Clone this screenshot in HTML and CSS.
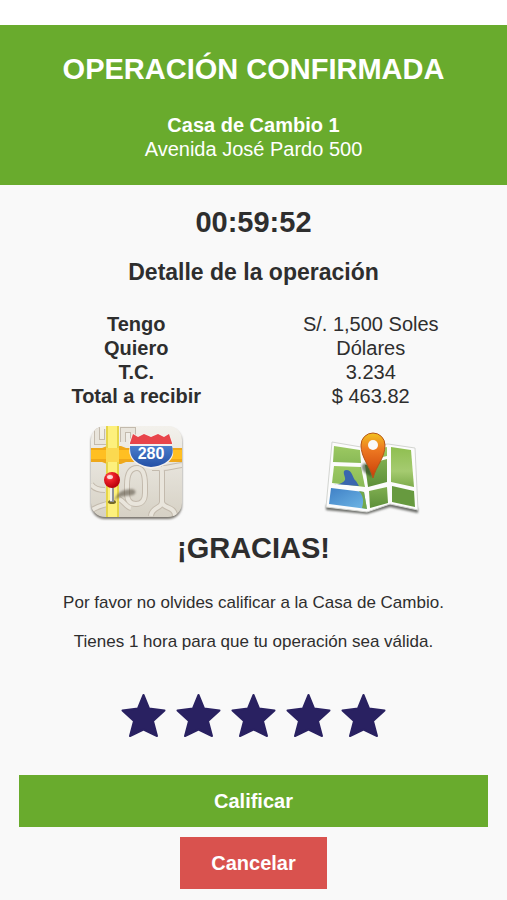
FILE: index.html
```html
<!DOCTYPE html>
<html lang="es">
<head>
<meta charset="utf-8">
<meta name="viewport" content="width=device-width, initial-scale=1">
<title>Operación confirmada</title>
<link rel="stylesheet" href="styles.css">
</head>
<body>
<header class="banner">
  <h1 class="heading">OPERACIÓN CONFIRMADA</h1>
  <p class="place"><strong>Casa de Cambio 1</strong><br>Avenida José Pardo 500</p>
</header>
<main class="content">
  <p class="heading timer">00:59:52</p>
  <h2 class="subheading">Detalle de la operación</h2>
  <table class="details">
    <tbody>
      <tr><th scope="row">Tengo</th><td>S/. 1,500 Soles</td></tr>
      <tr><th scope="row">Quiero</th><td>Dólares</td></tr>
      <tr><th scope="row">T.C.</th><td>3.234</td></tr>
      <tr><th scope="row">Total a recibir</th><td>$ 463.82</td></tr>
    </tbody>
  </table>
  <nav class="maps">
    <a href="#mapa" aria-label="Mapa">
      <svg class="map" viewBox="0 0 98 98" aria-hidden="true">
        <defs>
          <clipPath id="tile"><rect x="4" y="2" width="91" height="91" rx="14"/></clipPath>
          <linearGradient id="land" x2="0" y2="1"><stop stop-color="#f3f1ec"/><stop offset="1" stop-color="#d6d1c5"/></linearGradient>
          <linearGradient id="shield" x2="0" y2="1"><stop stop-color="#4a7dcb"/><stop offset="1" stop-color="#2450a6"/></linearGradient>
          <radialGradient id="ball" cx=".35" cy=".3" r=".7"><stop stop-color="#ff8a84"/><stop offset=".35" stop-color="#ee2029"/><stop offset="1" stop-color="#b8000d"/></radialGradient>
          <filter id="soft" x="-20%" y="-20%" width="140%" height="140%"><feGaussianBlur stdDeviation="1"/></filter>
          <path id="roads" d="M10 0v18h10V5M36 18V6h10v16M50 44c-7 0-10 6-10 17v8c0 8 4 11 9 11s9-3 9-11v-8c0-11-2-17-8-17zM65 44h7c3 0 3 2 3 5v29c0 7-10 4-11 14M75 78c1 7 13 4 13 14M75 44c8 0 10-2 20-3M4 60c3 5 8 6 14 6M0 90c8-8 14-8 20-10M32 75c5 2 7 8 12 9"/>
        </defs>
        <rect x="4" y="4" width="91" height="91" rx="14" fill="#77736c" filter="url(#soft)"/>
        <rect x="4" y="2" width="91" height="91" rx="14" fill="url(#land)"/>
        <g clip-path="url(#tile)">
          <use href="#roads" class="road-edge"/>
          <use href="#roads" class="road"/>
          <path d="M3 24h12l5-2h14l5 2h56v14H39l-5 2H20l-5-2H3z" fill="#efa81a"/>
          <path d="M3 26h92v9H3z" fill="#ffbf22"/>
          <path d="M19 0h13v98H19z" fill="#e6d548"/>
          <path d="M21 0h9v98h-9z" fill="#fdf07c"/>
          <path d="M19 24h13v14H19z" fill="#fbd950"/>
        </g>
        <path d="M42 18l4-9 5 3 6-3 7 3 7-3 6 3 5-3 4 9c-2 4 1 8 0 13-2 7-9 12-22 14-12-2-19-7-21-14-2-5 1-9-1-13z" fill="#f4f1ee"/>
        <path d="M43 19l3-9 5 3 6-3 7 3 7-3 6 3 5-3 3 9v1H43z" fill="#e8444a"/>
        <path d="M43 22h42c1 3 1 6 0 9-3 7-10 11-21 12-10-1-17-5-20-12-1-3-1-6-1-9z" fill="url(#shield)"/>
        <text class="route" x="64" y="35" text-anchor="middle">280</text>
        <path d="M26 78c4-6 4-12 19-13 4 1 5 4 1 6-7 2-13-1-20 7z" fill="#5d5547" opacity=".6" filter="url(#soft)"/>
        <ellipse cx="25" cy="78" rx="4" ry="2" fill="#756928"/>
        <path d="M25 60v18" stroke="#8f9298" stroke-width="4"/>
        <path d="M24 60v17" stroke="#f0f0f0" stroke-width="2"/>
        <circle cx="25" cy="56" r="8" fill="url(#ball)"/>
        <ellipse cx="23" cy="53" rx="3" ry="2" fill="#fff" opacity=".75"/>
      </svg>
    </a>
    <a href="#ruta" aria-label="Cómo llegar">
      <svg class="map" viewBox="0 0 98 98" aria-hidden="true">
        <defs>
          <linearGradient id="field" x2="0" y2="1"><stop stop-color="#9cc962"/><stop offset="1" stop-color="#8aba57"/></linearGradient>
          <linearGradient id="east" x2="0" y2="1"><stop stop-color="#8fbf50"/><stop offset=".6" stop-color="#a5cb70"/><stop offset="1" stop-color="#7dac4b"/></linearGradient>
          <linearGradient id="fold" x2="0" y2="1"><stop stop-color="#7fae50"/><stop offset="1" stop-color="#5d8f39"/></linearGradient>
          <linearGradient id="lake" x2="1" y2="1"><stop stop-color="#3f80c6"/><stop offset="1" stop-color="#70b8e6"/></linearGradient>
          <linearGradient id="marker" x2="0" y2="1"><stop stop-color="#f2c21f"/><stop offset=".35" stop-color="#ee7a22"/><stop offset="1" stop-color="#ca3e08"/></linearGradient>
        </defs>
        <path d="M4 86l41 4 23-7 28 6v-5l-28-5-23 5-41-3z" fill="#6a6c68" filter="url(#soft)"/>
        <path d="M10 18l29 5 27-3 27 4 3 62-28-6-23 8-41-5z" fill="#fcfcfc" stroke="#d3d5d1"/>
        <path d="M12 22l26 4 1 13-28-1z" fill="url(#field)"/>
        <path d="M12 42l27 1 4 20-33-4z" fill="url(#field)"/>
        <path d="M9 64l33 4 3 17-38-5z" fill="url(#lake)"/>
        <path d="M12 60c5 1 9-1 11-4 1-3-4-9 1-10 7 0 6 8 10 11l3 5z" fill="#3a66ae"/>
        <path d="M37 67l5 1 3 17-5-1c1-4 3-10-3-17z" fill="#72a84a"/>
        <path d="M42 27l23-4v9l-22 5z" fill="url(#field)"/>
        <path d="M43 41l22-6v23l-19 5z" fill="url(#fold)"/>
        <path d="M47 67l18-4 1 16-18 5z" fill="url(#fold)"/>
        <path d="M69 23l20 3 3 37-23-5z" fill="url(#east)"/>
        <path d="M70 62l22 5 1 16-23-5z" fill="#679a3f"/>
        <path d="M50 53c-11-5-13-12-7-14 6 1 6 6 7 14z" fill="#283e20" opacity=".6" filter="url(#soft)"/>
        <path d="M51 54C48 42 39 34 39 21a12 12 0 0 1 24 0c0 13-9 21-12 33z" fill="url(#marker)" stroke="#b65518"/>
        <circle cx="51" cy="21" r="5" fill="#fafafa"/>
      </svg>
    </a>
  </nav>
  <section class="thanks">
    <h2 class="heading">¡GRACIAS!</h2>
    <p>Por favor no olvides calificar a la Casa de Cambio.</p>
    <p>Tienes 1 hora para que tu operación sea válida.</p>
  </section>
  <svg width="0" height="0" class="symbols" aria-hidden="true">
    <symbol id="star" viewBox="0 0 45 45"><path d="M22.500 2L28 15.500L43.500 17.500L32 28L36 43L22.500 36.500L9 43L13 28L1.500 17.500L17 15.500Z" fill="#292161" stroke="#292161" stroke-width="2" stroke-linejoin="round"/></symbol>
  </svg>
  <div class="stars">
    <button type="button" aria-label="1 estrella"><svg><use href="#star"/></svg></button>
    <button type="button" aria-label="2 estrellas"><svg><use href="#star"/></svg></button>
    <button type="button" aria-label="3 estrellas"><svg><use href="#star"/></svg></button>
    <button type="button" aria-label="4 estrellas"><svg><use href="#star"/></svg></button>
    <button type="button" aria-label="5 estrellas"><svg><use href="#star"/></svg></button>
  </div>
  <div class="actions">
    <button type="button" class="button rate">Calificar</button>
    <button type="button" class="button cancel">Cancelar</button>
  </div>
</main>
</body>
</html>
```
FILE: styles.css
```css
* { box-sizing: border-box; }
body {
  margin: 0;
  padding-top: 25px;
  background: #fff;
  color: #2e2e2e;
  font: 20px/24px "Liberation Sans", Arial, sans-serif;
  text-align: center;
}
h1, h2, p { margin: 0; }
.heading { font-size: 29px; line-height: 36px; font-weight: bold; }
.banner {
  padding: 26px 16px 24px;
  background: #69ab2d;
  color: #fff;
}
.place { margin-top: 26px; }
.content { padding: 19px 19px 12px; background: #f9f9f9; }
.subheading { margin-top: 18px; font-size: 23px; line-height: 28px; }
.details {
  width: 100%;
  margin-top: 26px;
  border-collapse: collapse;
  table-layout: fixed;
}
.details th, .details td { padding: 0; }
.maps {
  display: grid;
  grid-template-columns: 1fr 1fr;
  margin-top: 16px;
}
.map { display: block; width: 98px; height: 98px; margin: 0 auto; }
.road-edge, .road { fill: none; }
.road-edge { stroke: #c3baad; stroke-width: 6px; }
.road { stroke: #e9e5dc; stroke-width: 4px; }
.route { font: bold 16px "Liberation Sans", Arial, sans-serif; fill: #fff; }
.thanks { margin-top: 8px; font-size: 17px; }
.thanks p { margin-top: 15px; }
.thanks .heading + p { margin-top: 25px; }
.symbols { display: block; }
.stars { display: flex; justify-content: center; gap: 10px; margin-top: 39px; }
.stars button { padding: 0; border: 0; background: none; }
.stars svg { display: block; width: 45px; height: 45px; }
.actions { display: grid; justify-items: center; gap: 10px; margin-top: 37px; }
.button {
  padding: 14px 31px;
  border: 0;
  color: #fff;
  font: bold 20px/24px "Liberation Sans", Arial, sans-serif;
}
.rate { width: 100%; background: #69ab2d; }
.cancel { background: #d9524e; }
```
